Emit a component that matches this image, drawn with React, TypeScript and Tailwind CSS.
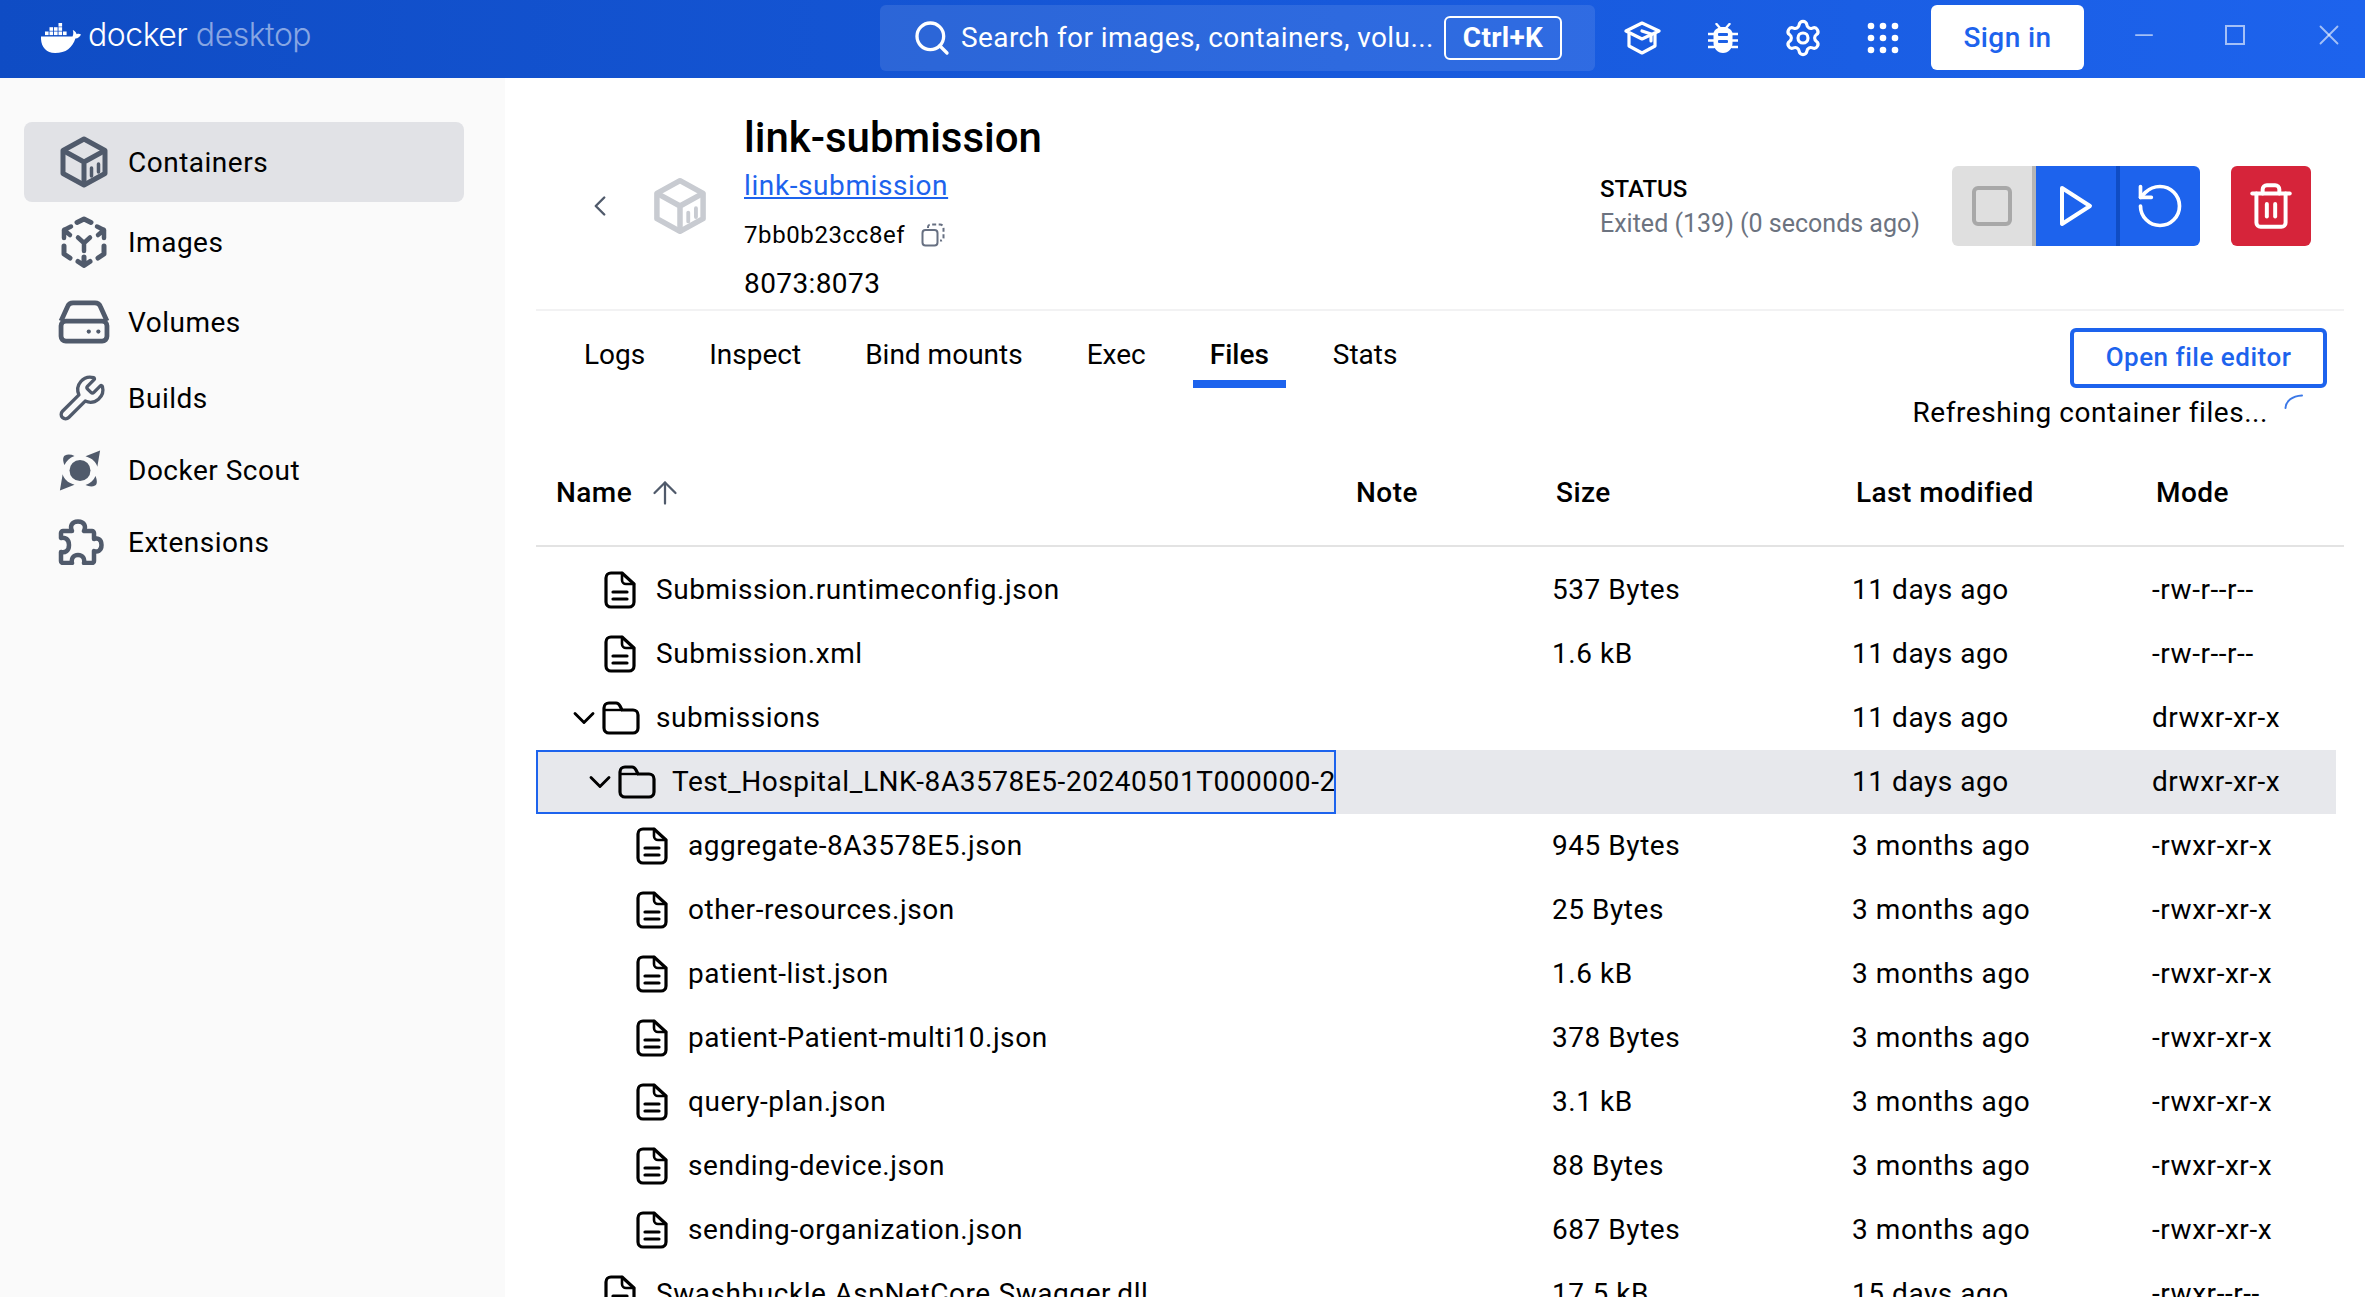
import { Search, Settings, Wrench, RotateCcw, Trash2, ChevronLeft, ChevronDown, ArrowUp, Minus, X } from 'lucide-react';

const DockerWhale = () => (
  <svg width="40" height="30" viewBox="0 0 40 30" fill="white">
    <path d="M0 13.500h31.500c1-2.200 1-4.500.3-6.500 2 .8 3.300 2.300 3.800 4.200 1.500-.6 3-.5 4.400.2-1 2.400-3 3.800-5.600 4C31.500 24.500 25 30 14 30 4.500 30-.5 23 0 13.500z" />
    <rect x="4" y="8.500" width="3.600" height="3.600" />
    <rect x="8.500" y="8.500" width="3.600" height="3.600" />
    <rect x="13" y="8.500" width="3.600" height="3.600" />
    <rect x="17.500" y="8.500" width="3.600" height="3.600" />
    <rect x="22" y="8.500" width="3.600" height="3.600" />
    <rect x="8.500" y="4.200" width="3.600" height="3.600" />
    <rect x="13" y="4.200" width="3.600" height="3.600" />
    <rect x="17.500" y="4.200" width="3.600" height="3.600" />
    <rect x="17.500" y="0" width="3.600" height="3.600" />
  </svg>
);

const ContainerIcon = ({ className }: { className?: string }) => (
  <svg width="48" height="52" viewBox="0 0 48 52" fill="none" stroke="currentColor" strokeWidth="5" strokeLinejoin="round" strokeLinecap="round" className={className}>
    <path d="M24 3 45 14.500V37.500L24 49 3 37.500V14.500Z" />
    <path d="M4 15 24 26 44 15M24 26V48" />
    <path d="M31.500 32V40M38.500 28V36" strokeWidth="3.500" />
  </svg>
);

const ImagesIcon = () => (
  <svg width="48" height="52" viewBox="0 0 48 52" fill="none" stroke="#505a6b" strokeWidth="5" strokeLinejoin="round" strokeLinecap="round">
    <path d="M17 6.500 24 3l7 3.500" />
    <path d="M4 22v-8l7-3.500M4 14l6 5" strokeWidth="4.500" />
    <path d="M44 22v-8l-7-3.500M44 14l-6 5" strokeWidth="4.500" />
    <path d="M4 30v8l6 4M44 30v8l-6 4" />
    <path d="M24 41v8M18 45.500l6 4 6-4" />
    <path d="M24 27v8M18 21.500l6 5.500 6-5.500" strokeWidth="4.500" />
  </svg>
);

const VolumesIcon = () => (
  <svg width="52" height="44" viewBox="0 0 54 46" fill="none" stroke="#505a6b" strokeWidth="5" strokeLinejoin="round">
    <path d="M3 22 10 6.500C11 4 13 3 15.500 3h23c2.500 0 4.500 1 5.500 3.500L51 22" />
    <rect x="3" y="22" width="48" height="21" rx="5" />
    <circle cx="32" cy="33" r="2.200" fill="#505a6b" stroke="none" />
    <circle cx="42" cy="33" r="2.200" fill="#505a6b" stroke="none" />
  </svg>
);

const ScoutIcon = () => (
  <svg width="42" height="41" viewBox="0 0 46 44" fill="#505a6b">
    <circle cx="23" cy="22" r="11.500" />
    <path d="M45 0 42 18C40.500 13 37 9 29 6.500Z" />
    <path d="M1 44 4 26C5.500 31 9 35 17 37.500Z" />
    <path d="M6 16C4 11 4 7 6.500 5.500 9.500 4 13.500 4.500 17 6 11.500 8 8 11.500 6 16Z" />
    <path d="M40 28C42 33 42 37 39.500 38.500 36.500 40 32.500 39.500 29 38 34.500 36 38 32.500 40 28Z" />
  </svg>
);

const ExtensionsIcon = () => (
  <svg width="46" height="46" viewBox="0 0 46 46" fill="none" stroke="#505a6b" strokeWidth="4.500" strokeLinejoin="round">
    <path d="M5 12h9C12 8 13 2.500 20 2.500S28 8 26 12h8a2 2 0 0 1 2 2v6c3-1.500 7.500 0 7.500 6S39 33.500 36 32v10a2 2 0 0 1-2 2h-8c1-4-1-8-6-8s-7 4-6 8H5a2 2 0 0 1-2-2v-9c4 1 8-1 8-7s-4-8-8-7v-5a2 2 0 0 1 2-2z" />
  </svg>
);

const LearnIcon = () => (
  <svg width="38" height="34" viewBox="0 0 38 34" fill="none" stroke="white" strokeWidth="3.200" strokeLinejoin="round" strokeLinecap="round">
    <path d="M18 2 35 10 18 18 2 10Z" />
    <path d="M5 13V25L18 32 31 25V13" />
    <path d="M18 10 27 13V20" />
  </svg>
);

const BugIcon = () => (
  <svg width="30" height="30" viewBox="0 0 30 30" fill="white">
    <path d="M15 4C10 4 6.500 6.500 5.500 10v10c0 5.500 4 10 9.500 10s9.500-4.500 9.500-10V10C23.500 6.500 20 4 15 4z" />
    <path d="M8.500 1l3.500 4M21.500 1 18 5M0 11h6M24 11h6M0 17.500h6M24 17.500h6M0 24h6M24 24h6" stroke="white" strokeWidth="2.400" strokeLinecap="round" />
    <rect x="10" y="10" width="10" height="3" rx="1" fill="#1c60e6" />
    <rect x="10" y="17" width="10" height="3" rx="1" fill="#1c60e6" />
  </svg>
);

const GridIcon = () => (
  <svg width="32" height="32" viewBox="0 0 32 32" fill="white">
    {[4, 16, 28].flatMap((y) => [4, 16, 28].map((x) => <circle key={`${x}-${y}`} cx={x} cy={y} r="3.300" />))}
  </svg>
);

const PlayIcon = () => (
  <svg width="34" height="42" viewBox="0 0 34 42" fill="none" stroke="white" strokeWidth="4" strokeLinejoin="round">
    <path d="M3 3 31 21 3 39Z" />
  </svg>
);

const FileIcon = () => (
  <svg width="32" height="38" viewBox="0 0 32 38" fill="none" stroke="black" strokeWidth="3.200" strokeLinejoin="round" strokeLinecap="round" className="shrink-0">
    <path d="M7 2h11l12 11v18a5 5 0 0 1-5 5H7a5 5 0 0 1-5-5V7a5 5 0 0 1 5-5z" />
    <path d="M18 2v7a4 4 0 0 0 4 4h8" strokeWidth="2.600" />
    <path d="M9 21h14M9 28h14" />
  </svg>
);

const FolderIcon = () => (
  <svg width="38" height="34" viewBox="0 0 38 34" fill="none" stroke="black" strokeWidth="3.200" strokeLinejoin="round" className="shrink-0">
    <path d="M2 7a5 5 0 0 1 5-5h7c2 0 3 1 4 3l2 4h11a5 5 0 0 1 5 5v13a5 5 0 0 1-5 5H7a5 5 0 0 1-5-5z" />
    <path d="M2 9h18" strokeWidth="2.400" />
  </svg>
);

const CopyIcon = () => (
  <svg width="24" height="24" viewBox="0 0 24 24" fill="none" stroke="#677082" strokeWidth="2" strokeLinejoin="round">
    <rect x="1.500" y="7" width="15" height="15.500" rx="3" />
    <path d="M7 5V4a2.500 2.500 0 0 1 2.500-2.500H19A3.500 3.500 0 0 1 22.500 5v10a2.500 2.500 0 0 1-2.500 2.500h-1" strokeDasharray="4 2.500" />
  </svg>
);

const Spinner = () => (
  <svg width="20" height="16" viewBox="0 0 20 16" fill="none" stroke="#3b78e7" strokeWidth="2" strokeLinecap="round" className="absolute right-[40px] top-[83px]">
    <path d="M1.500 14C2 7 8 2 18 1.500" />
  </svg>
);

const navItems = [
  { label: 'Containers', icon: <ContainerIcon className="text-[#505a6b]" />, height: 'h-20', active: true },
  { label: 'Images', icon: <ImagesIcon />, height: 'h-20' },
  { label: 'Volumes', icon: <div className="-ml-[2px]"><VolumesIcon /></div>, height: 'h-20' },
  { label: 'Builds', icon: <Wrench size={50} strokeWidth={1.600} color="#505a6b" className="-ml-[3px]" />, height: 'h-[72px]' },
  { label: 'Docker Scout', icon: <div className="-ml-[1px]"><ScoutIcon /></div>, height: 'h-[72px]' },
  { label: 'Extensions', icon: <div className="-ml-[2px]"><ExtensionsIcon /></div>, height: 'h-[72px]' },
];

const tabs = ['Logs', 'Inspect', 'Bind mounts', 'Exec', 'Files', 'Stats'];

type Row = { name: string; size: string; modified: string; mode: string; depth: 0 | 1 | 2; folder?: boolean; selected?: boolean };

const rows: Row[] = [
  { name: 'Submission.runtimeconfig.json', size: '537 Bytes', modified: '11 days ago', mode: '-rw-r--r--', depth: 0 },
  { name: 'Submission.xml', size: '1.6 kB', modified: '11 days ago', mode: '-rw-r--r--', depth: 0 },
  { name: 'submissions', size: '', modified: '11 days ago', mode: 'drwxr-xr-x', depth: 0, folder: true },
  { name: 'Test_Hospital_LNK-8A3578E5-20240501T000000-2', size: '', modified: '11 days ago', mode: 'drwxr-xr-x', depth: 1, folder: true, selected: true },
  { name: 'aggregate-8A3578E5.json', size: '945 Bytes', modified: '3 months ago', mode: '-rwxr-xr-x', depth: 2 },
  { name: 'other-resources.json', size: '25 Bytes', modified: '3 months ago', mode: '-rwxr-xr-x', depth: 2 },
  { name: 'patient-list.json', size: '1.6 kB', modified: '3 months ago', mode: '-rwxr-xr-x', depth: 2 },
  { name: 'patient-Patient-multi10.json', size: '378 Bytes', modified: '3 months ago', mode: '-rwxr-xr-x', depth: 2 },
  { name: 'query-plan.json', size: '3.1 kB', modified: '3 months ago', mode: '-rwxr-xr-x', depth: 2 },
  { name: 'sending-device.json', size: '88 Bytes', modified: '3 months ago', mode: '-rwxr-xr-x', depth: 2 },
  { name: 'sending-organization.json', size: '687 Bytes', modified: '3 months ago', mode: '-rwxr-xr-x', depth: 2 },
  { name: 'Swashbuckle.AspNetCore.Swagger.dll', size: '17.5 kB', modified: '15 days ago', mode: '-rwxr--r--', depth: 0 },
];

// depth 1 is only the selected row, its 2px focus border takes part of the indent
const depthPadding = { 0: 'pl-[68px]', 1: 'pl-[82px]', 2: 'pl-[100px]' };

const TreeRow = ({ row }: { row: Row }) => (
  <div className={`flex h-16 w-[1800px] items-center ${row.selected ? 'bg-[#e7e8ec]' : ''}`}>
    <div className={`flex h-full w-[800px] shrink-0 items-center overflow-hidden ${depthPadding[row.depth]} ${row.selected ? 'border-2 border-[#1d63ed]' : ''}`}>
      {row.folder && <ChevronDown size={36} strokeWidth={1.900} className="-ml-[38px] shrink-0" />}
      {row.folder ? <FolderIcon /> : <FileIcon />}
      <span className={`whitespace-nowrap ${row.folder ? 'ml-[16px]' : 'ml-[20px]'}`}>{row.name}</span>
    </div>
    <div className="w-[200px] shrink-0" />
    <div className="w-[300px] shrink-0 pl-[16px]">{row.size}</div>
    <div className="w-[300px] shrink-0 pl-[16px]">{row.modified}</div>
    <div className="w-[200px] shrink-0 pl-[16px]">{row.mode}</div>
  </div>
);

export default function App() {
  return (
    <div className="flex h-[1297px] flex-col overflow-hidden bg-white font-['Roboto',sans-serif] text-black">
      {/* title bar */}
      <header className="flex h-[78px] shrink-0 items-center bg-gradient-to-r from-[#0f4cc4] to-[#1d63ed] pb-[3px] text-white">
        <div className="flex w-[880px] shrink-0 items-center pl-[41px]">
          <DockerWhale />
          <span className="mb-[6px] ml-[7px] font-['Inter',sans-serif] text-[32px] font-light leading-none tracking-[-0.5px]">
            docker <span className="text-white/50">desktop</span>
          </span>
        </div>
        <div className="flex h-[66px] w-[715px] shrink-0 items-center rounded-md bg-white/10 pl-[32px] pr-[33px] text-[28px] tracking-[0.42px]">
          <Search size={40} strokeWidth={2} className="shrink-0" />
          <span className="ml-[9px] flex-1 whitespace-nowrap">Search for images, containers, volu...</span>
          <span className="flex h-[44px] w-[118px] shrink-0 items-center justify-center rounded-md border-2 border-white text-[28px] font-bold tracking-[0.3px]">Ctrl+K</span>
        </div>
        <div className="ml-[28px] flex w-[40px] shrink-0 justify-center"><LearnIcon /></div>
        <div className="ml-[40px] flex w-[40px] shrink-0 justify-center"><BugIcon /></div>
        <div className="ml-[40px] flex w-[40px] shrink-0 justify-center"><Settings size={40} strokeWidth={1.900} /></div>
        <div className="ml-[40px] flex w-[40px] shrink-0 justify-center"><GridIcon /></div>
        <button className="ml-[28px] h-[65px] w-[153px] shrink-0 rounded-md bg-white text-[28px] font-medium tracking-[0.4px] text-[#1d63ed]">Sign in</button>
        <div className="mb-[5px] ml-[46px] flex w-[28px] shrink-0 justify-center text-white/60"><Minus size={28} strokeWidth={1.500} /></div>
        <div className="mb-[5px] ml-[67px] h-[20px] w-[20px] shrink-0 border-2 border-white/60" />
        <div className="mb-[5px] ml-[67px] shrink-0 text-white/60"><X size={34} strokeWidth={1.300} /></div>
      </header>

      <div className="flex min-h-0 flex-1">
        {/* sidebar */}
        <nav className="w-[505px] shrink-0 bg-[#fafafa] pl-6 pr-[41px] pt-11">
          {navItems.map((item) => (
            <div key={item.label} className={`flex items-center rounded-lg pl-[36px] ${item.height} ${item.active ? 'bg-[#e1e2e6]' : ''}`}>
              <div className="flex w-[68px] shrink-0 justify-start">{item.icon}</div>
              <span className="pt-[2px] text-[28px] tracking-[0.5px]">{item.label}</span>
            </div>
          ))}
        </nav>

        {/* main content */}
        <main className="min-w-0 flex-1 pl-[31px] pr-[21px]">
          <div className="flex h-[233px] items-center border-b-2 border-[#f2f2f3] pt-[24px]">
            <ChevronLeft size={34} strokeWidth={1.700} color="#505a6b" className="ml-[47px] shrink-0" />
            <ContainerIcon className="ml-[39px] shrink-0 scale-110 text-[#c8cbd1]" />
            <div className="ml-[40px] w-[856px] shrink-0 pb-[1px]">
              <div className="text-[42px] font-medium leading-[62px]">link-submission</div>
              <div className="text-[28px] leading-[34px] tracking-[0.6px] text-[#1d63ed] underline">link-submission</div>
              <div className="mt-[14px] flex items-center text-[24px] leading-[36px] tracking-[0.6px]">7bb0b23cc8ef<span className="ml-[16px]"><CopyIcon /></span></div>
              <div className="mt-[12px] text-[28px] leading-[38px] tracking-[0.4px]">8073:8073</div>
            </div>
            <div className="w-[352px] shrink-0 pt-[3px]">
              <div className="text-[24px] font-medium leading-[34px]">STATUS</div>
              <div className="text-[25px] leading-[36px] text-[#6c7380]">Exited (139) (0 seconds ago)</div>
            </div>
            <div className="flex h-20 shrink-0 overflow-hidden rounded-md">
              <div className="flex w-[84px] items-center justify-center border-r-4 border-[#b5b5b5] bg-[#dfdfdf]">
                <div className="h-[40px] w-[40px] rounded-md border-4 border-[#a8a8a8]" />
              </div>
              <div className="flex w-[84px] items-center justify-center border-r-4 border-[#0f4cc4] bg-[#1d63ed]">
                <PlayIcon />
              </div>
              <div className="flex w-20 items-center justify-center bg-[#1d63ed]">
                <RotateCcw size={52} strokeWidth={1.700} color="white" />
              </div>
            </div>
            <div className="ml-[31px] flex h-20 w-20 shrink-0 items-center justify-center rounded-md bg-[#d6243a]">
              <Trash2 size={50} strokeWidth={1.900} color="white" />
            </div>
          </div>

          <div className="relative flex h-[145px] items-start pt-[17px]">
            <div className="flex gap-[30px] pl-[31px] text-[28px]">
              {tabs.map((tab) => (
                <div key={tab} className={`flex h-[60px] items-center border-b-[8px] px-[17px] pt-[1px] ${tab === 'Files' ? 'border-[#1d63ed] font-medium' : 'border-transparent'}`}>{tab}</div>
              ))}
            </div>
            <div className="ml-auto flex flex-col items-end">
              <button className="mr-[17px] h-[60px] w-[257px] rounded-md border-4 border-[#1d63ed] pb-[2px] text-[26px] font-medium tracking-[0.5px] text-[#1d63ed]">Open file editor</button>
              <div className="mr-[76px] mt-[8px] text-[28px] leading-[34px] tracking-[0.55px]">Refreshing container files...</div>
              <Spinner />
            </div>
          </div>

          <div className="flex h-[91px] items-center border-b-2 border-[#e3e3e3] pb-[16px] text-[28px] font-medium tracking-[0.45px]">
            <div className="flex w-[800px] shrink-0 items-center pl-5">Name<ArrowUp size={36} strokeWidth={1.500} color="#505a6b" className="ml-[15px]" /></div>
            <div className="w-[200px] shrink-0 pl-5">Note</div>
            <div className="w-[300px] shrink-0 pl-5">Size</div>
            <div className="w-[300px] shrink-0 pl-5">Last modified</div>
            <div className="w-[200px] shrink-0 pl-5">Mode</div>
          </div>

          <div className="pt-[11px] text-[28px] tracking-[0.55px]">
            {rows.map((row) => <TreeRow key={row.name} row={row} />)}
          </div>
        </main>
      </div>
    </div>
  );
}
